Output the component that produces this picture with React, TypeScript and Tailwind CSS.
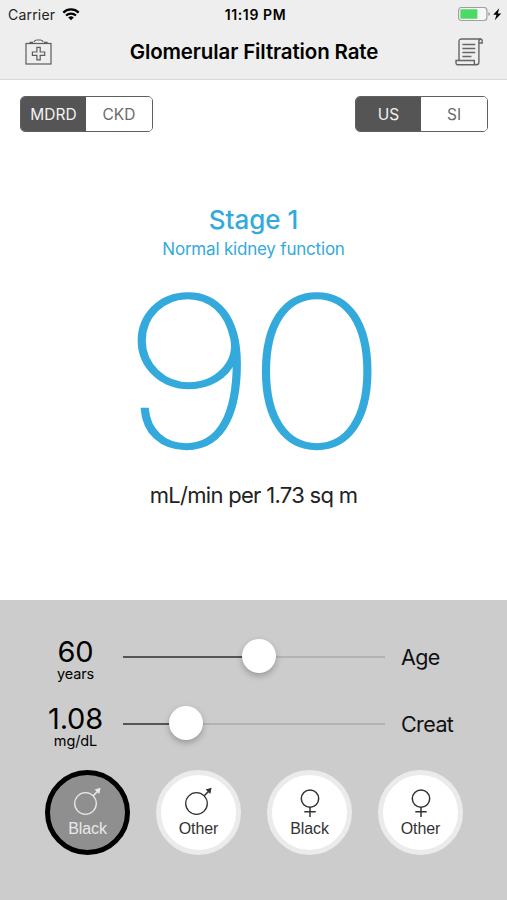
import { useState } from 'react';
import type { ReactNode } from 'react';

const SEGMENT_ACTIVE = 'bg-[#555555] text-[#f2f2f2]';
const SEGMENT_IDLE = 'bg-white text-[#6a6a6a]';

const PATIENT_ACTIVE = 'border-black bg-[#8f8f8f] text-[#e9e9e9]';
const PATIENT_IDLE = 'border-[#ebebeb] bg-white text-[#333333]';

function WifiGlyph() {
  return (
    <svg aria-hidden className="h-[13px] w-[18px]" viewBox="0 0 18 13">
      <path d="M1.3 4.6a11 11 0 0 1 15.4 0" fill="none" stroke="#000" strokeWidth="2.2" />
      <path d="M4 7.6a7.2 7.2 0 0 1 10 0" fill="none" stroke="#000" strokeWidth="2.1" />
      <path d="M9 12.2 6.2 9.5a4 4 0 0 1 5.6 0Z" fill="#000" />
    </svg>
  );
}

function BatteryGlyph() {
  return (
    <svg aria-hidden className="h-[15px] w-[45px]" viewBox="0 0 45 15">
      <rect x="0.6" y="0.5" width="28.3" height="13" rx="3" fill="#f6f6f6" stroke="#a0a0a0" strokeWidth="1.2" />
      <rect x="2.4" y="2.3" width="17" height="9.4" rx="1" fill="#4cd964" />
      <path d="M30.4 5q1.7.4 1.7 2t-1.7 2Z" fill="#a0a0a0" />
      <path d="M41.2 1.2 35.2 7.8h3.3l-1.7 5.5L43.2 6.5h-3.4Z" fill="#000" />
    </svg>
  );
}

function FirstAidGlyph() {
  return (
    <svg aria-hidden className="h-[27px] w-[28px]" viewBox="0 0 28 27" fill="none" stroke="#5c5c5c" strokeWidth="1.2">
      <rect x="1" y="4.5" width="25" height="20.5" />
      <path d="M9 3.2Q9.6 1 11.6 1h4Q17.6 1 18.2 3.2" />
      <path d="M4.5 3.6h3.6M19 3.6h3.6" strokeWidth="1.6" />
      <path d="M11.9 8.4h3.3V13h4.5v3.3h-4.5v4.6h-3.3v-4.6H7.4V13h4.5Z" />
    </svg>
  );
}

function ScrollGlyph() {
  return (
    <svg aria-hidden className="h-[28px] w-[29px]" viewBox="0 0 29 28" fill="none" stroke="#666666" strokeWidth="1.4">
      <path d="M4 22.5v-19Q4 1 6.5 1H25q2.2 0 2.2 2v2h-3.3" />
      <path d="M26 1q-2.1 0-2.1 2.5V24q0 2.8-2.4 2.8h-18Q1 26.8 1 25v-2.5h18.3v2.2q0 2.1 1.8 2.1" />
      <path d="M7.4 6.5h12.8M7.4 10.5h12.8M7.4 14.5h12.8M7.4 18.5h9" />
    </svg>
  );
}

function MaleGlyph() {
  return (
    <svg aria-hidden className="h-[30px] w-[30px]" viewBox="0 0 30 30">
      <circle cx="12.5" cy="16.5" r="10.8" fill="none" stroke="currentColor" strokeWidth="1.3" />
      <path d="m20.2 8.8 4.5-4.5" stroke="currentColor" strokeWidth="1.6" />
      <path d="M27.6.8 26.3 6.9l-4.7-4.3Z" fill="currentColor" />
    </svg>
  );
}

function FemaleGlyph() {
  return (
    <svg aria-hidden className="h-[30px] w-[30px]" viewBox="0 0 30 30" fill="none" stroke="currentColor" strokeWidth="1.5">
      <circle cx="15" cy="11.6" r="8.7" />
      <path d="M15 20.3V30M9.3 24.7h11.4" />
    </svg>
  );
}

function SegmentedControl({
  options,
  value,
  onChange,
}: {
  options: string[];
  value: string;
  onChange: (next: string) => void;
}) {
  return (
    <div className="grid h-9 w-[133px] grid-cols-[65px_1fr] overflow-hidden rounded-[5px] border border-[#606060]">
      {options.map((option) => (
        <button
          aria-pressed={option === value}
          className={`pt-px text-[15.5px] ${option === value ? SEGMENT_ACTIVE : SEGMENT_IDLE}`}
          key={option}
          onClick={() => onChange(option)}
          type="button"
        >
          {option}
        </button>
      ))}
    </div>
  );
}

function SliderRow({
  value,
  unit,
  label,
  percent,
}: {
  value: string;
  unit: string;
  label: string;
  percent: number;
}) {
  return (
    <div className="flex h-[67px] items-start">
      <div className="flex w-[151px] shrink-0 flex-col items-center text-black">
        <span className="text-[29px] leading-[32px] tracking-[-0.2px]">{value}</span>
        <span className="text-[14.5px] leading-[12px] tracking-[-0.1px]">{unit}</span>
      </div>
      <div className="-ml-7 flex h-[42px] w-[262px] items-center">
        <div className="h-[2px] bg-[#555555]" style={{ width: `${percent}%` }} />
        <div className="z-10 -mx-[17px] -mt-[3px] size-[34px] shrink-0 rounded-full bg-white shadow-[0_3px_6px_rgba(0,0,0,0.25)]" />
        <div className="h-[2px] flex-1 bg-[#b3b3b3]" />
      </div>
      <span className="ml-4 pt-[6px] text-[21.5px] leading-[30px] tracking-[-0.6px] text-[#111111]">{label}</span>
    </div>
  );
}

function PatientButton({
  isActive,
  icon,
  label,
  onClick,
}: {
  isActive: boolean;
  icon: ReactNode;
  label: string;
  onClick: () => void;
}) {
  return (
    <button
      aria-pressed={isActive}
      className={`flex size-[85px] flex-col items-center rounded-full border-[5px] pt-3 ${isActive ? PATIENT_ACTIVE : PATIENT_IDLE}`}
      onClick={onClick}
      type="button"
    >
      {icon}
      <span className="mt-[2px] font-['Liberation_Sans',sans-serif] text-[16px] leading-[20px] tracking-[-0.1px]">
        {label}
      </span>
    </button>
  );
}

const PATIENTS = [
  { id: 'male-black', label: 'Black', Icon: MaleGlyph },
  { id: 'male-other', label: 'Other', Icon: MaleGlyph },
  { id: 'female-black', label: 'Black', Icon: FemaleGlyph },
  { id: 'female-other', label: 'Other', Icon: FemaleGlyph },
];

export default function App() {
  const [formula, setFormula] = useState('MDRD');
  const [units, setUnits] = useState('US');
  const [patient, setPatient] = useState('male-black');

  return (
    <div className="flex h-[900px] w-[507px] flex-col overflow-hidden bg-white font-['Inter',sans-serif]">
      <header className="h-20 border-b border-[#d8d8d8] bg-[#eeeeee]">
        <div className="grid h-7 grid-cols-[1fr_auto_1fr] items-center pl-2 pr-1">
          <div className="flex items-center gap-[7px] text-[14px] text-[#222222]">
            <span className="tracking-[0.2px]">Carrier</span>
            <WifiGlyph />
          </div>
          <span className="text-[14px] font-semibold tracking-[0.6px] text-black">11:19 PM</span>
          <div className="flex justify-end">
            <BatteryGlyph />
          </div>
        </div>
        <div className="flex h-12 items-center justify-between pl-[25px] pr-[23px]">
          <FirstAidGlyph />
          <h1 className="pt-px text-[20.5px] font-semibold tracking-[-0.13px] text-black">Glomerular Filtration Rate</h1>
          <ScrollGlyph />
        </div>
      </header>

      <main className="flex h-[520px] flex-col">
        <div className="flex justify-between pl-5 pr-[19px] pt-4">
          <SegmentedControl onChange={setFormula} options={['MDRD', 'CKD']} value={formula} />
          <SegmentedControl onChange={setUnits} options={['US', 'SI']} value={units} />
        </div>
        <div className="flex flex-col items-center pt-[71px] text-[#34aadc]">
          <h2 className="text-[26px] font-medium leading-[34px]">Stage 1</h2>
          <p className="pt-px text-[17px] leading-[22px] tracking-[-0.2px]">Normal kidney function</p>
          <div className="mt-2 mb-px scale-x-[1.15] pr-[8px] text-[208px] font-thin leading-[206px] tracking-[-9.5px] [-webkit-text-stroke:2.4px_#34aadc]">
            90
          </div>
          <p className="pt-1 text-[22px] leading-[32px] tracking-[-0.7px] text-[#222222]">mL/min per 1.73 sq m</p>
        </div>
      </main>

      <section className="h-[300px] bg-[#cccccc] pt-[36px]">
        <SliderRow label="Age" percent={52} unit="years" value="60" />
        <SliderRow label="Creat" percent={24} unit="mg/dL" value="1.08" />
        <div className="flex gap-[26px] pl-[45px]">
          {PATIENTS.map(({ id, label, Icon }) => (
            <PatientButton
              icon={<Icon />}
              isActive={patient === id}
              key={id}
              label={label}
              onClick={() => setPatient(id)}
            />
          ))}
        </div>
      </section>
    </div>
  );
}
